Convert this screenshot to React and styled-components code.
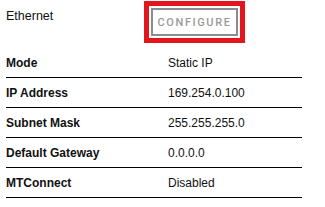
import React from 'react';
import styled, { createGlobalStyle } from 'styled-components';

const GlobalStyle = createGlobalStyle`
  body {
    margin: 0;
    background: #ffffff;
    font-family: Arial, 'Liberation Sans', sans-serif;
    color: #111111;
  }
`;

const Panel = styled.div`
  width: 296px;
  padding: 0 0 0 6px;
`;

const Header = styled.div`
  display: flex;
  align-items: flex-start;
  height: 48px;
`;

const Title = styled.div`
  width: 145px;
  font-size: 12.5px;
  line-height: 15px;
  padding-top: 9px;
`;

const ConfigureButton = styled.button`
  margin-top: 8px;
  width: 87px;
  height: 28px;
  padding: 0;
  background: #ffffff;
  border: 2px solid #8c8c8c;
  outline: 5px solid #e3161d;
  outline-offset: 2px;
  color: #9a9a9a;
  font-family: Roboto, 'Liberation Sans', sans-serif;
  font-weight: 500;
  font-size: 11px;
  letter-spacing: 1.6px;
  text-transform: uppercase;
  cursor: pointer;
`;

const Row = styled.div`
  display: grid;
  grid-template-columns: 162px 1fr;
  align-items: center;
  height: 30px;
  box-sizing: border-box;
  border-bottom: 1px solid #000;
  font-size: 12px;
`;

const Label = styled.span`
  font-weight: bold;
`;

const Value = styled.span``;

const rows = [
  ['Mode', 'Static IP'],
  ['IP Address', '169.254.0.100'],
  ['Subnet Mask', '255.255.255.0'],
  ['Default Gateway', '0.0.0.0'],
  ['MTConnect', 'Disabled'],
];

export default function App() {
  return (
    <>
      <GlobalStyle />
      <Panel>
        <Header>
          <Title>Ethernet</Title>
          <ConfigureButton>Configure</ConfigureButton>
        </Header>
        {rows.map(([label, value]) => (
          <Row key={label}>
            <Label>{label}</Label>
            <Value>{value}</Value>
          </Row>
        ))}
      </Panel>
    </>
  );
}
